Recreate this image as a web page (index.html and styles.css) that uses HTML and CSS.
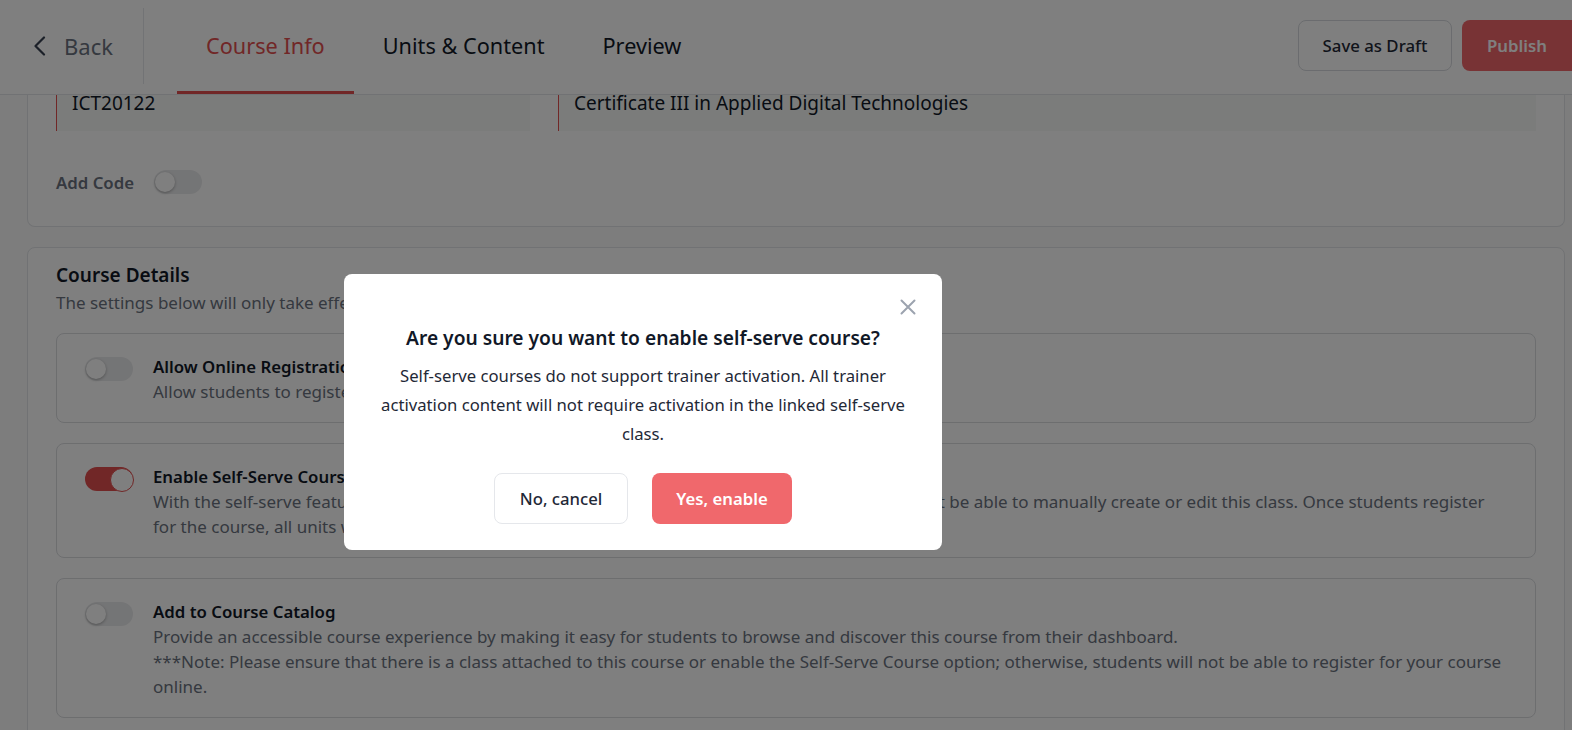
FILE: index.html
```html
<!DOCTYPE html>
<html lang="en">
<head>
<meta charset="utf-8">
<title>Course Info</title>
<link rel="stylesheet" href="styles.css">
</head>
<body>
<header class="topbar">
  <a class="back">
    <svg class="back-icon" width="13" height="20" viewBox="0 0 13 20"><path d="M11 1.5 L2.5 10 L11 18.5" fill="none" stroke="#374151" stroke-width="2.2" stroke-linecap="round" stroke-linejoin="round"/></svg>
    <span>Back</span>
  </a>
  <nav class="tabs">
    <a class="tab active">Course Info</a>
    <a class="tab">Units &amp; Content</a>
    <a class="tab">Preview</a>
  </nav>
  <div class="actions">
    <button class="btn btn-outline">Save as Draft</button>
    <button class="btn btn-primary">Publish</button>
  </div>
</header>

<main class="main">
  <section class="card card-top">
    <div class="inputs">
      <div class="input">ICT20122</div>
      <div class="input">Certificate III in Applied Digital Technologies</div>
    </div>
    <div class="code-row">
      <span class="code-label">Add Code</span>
      <span class="toggle"></span>
    </div>
  </section>

  <section class="card card-details">
    <h2 class="card-title">Course Details</h2>
    <p class="card-sub">The settings below will only take effect after the course is published.</p>
    <div class="options">
      <div class="option">
        <span class="toggle"></span>
        <div class="option-text">
          <div class="option-title">Allow Online Registration</div>
          <div class="option-desc">Allow students to register for this course online.</div>
        </div>
      </div>
      <div class="option">
        <span class="toggle on"></span>
        <div class="option-text">
          <div class="option-title">Enable Self-Serve Course</div>
          <div class="option-desc">With the self-serve feature, a class will be automatically created for this new course and you will not be able to manually create or edit this class. Once students register for the course, all units will be automatically released to them.</div>
        </div>
      </div>
      <div class="option">
        <span class="toggle"></span>
        <div class="option-text">
          <div class="option-title">Add to Course Catalog</div>
          <div class="option-desc">Provide an accessible course experience by making it easy for students to browse and discover this course from their dashboard.</div>
          <div class="option-desc">***Note: Please ensure that there is a class attached to this course or enable the Self-Serve Course option; otherwise, students will not be able to register for your course online.</div>
        </div>
      </div>
    </div>
  </section>
</main>

<div class="overlay">
  <div class="modal">
    <button class="modal-close" aria-label="Close">
      <svg width="16" height="16" viewBox="0 0 16 16"><path d="M1.5 1.5 L14.5 14.5 M14.5 1.5 L1.5 14.5" stroke="#9ca3af" stroke-width="2" stroke-linecap="round"/></svg>
    </button>
    <h3 class="modal-title">Are you sure you want to enable self-serve course?</h3>
    <p class="modal-body">Self-serve courses do not support trainer activation. All trainer activation content will not require activation in the linked self-serve class.</p>
    <div class="modal-actions">
      <button class="mbtn mbtn-cancel">No, cancel</button>
      <button class="mbtn mbtn-confirm">Yes, enable</button>
    </div>
  </div>
</div>
</body>
</html>
```

FILE: styles.css
```css
* { box-sizing: border-box; }

html, body {
  margin: 0;
  padding: 0;
  overflow: hidden;
}

body {
  font-family: "Noto Sans", "Open Sans", sans-serif;
  background: #fafafa;
  color: #111827;
  width: 1572px;
  height: 730px;
}

/* ---------- Top bar ---------- */
.topbar {
  display: flex;
  align-items: stretch;
  height: 95px;
  background: #ffffff;
  border-bottom: 1px solid #e2e4e8;
}

.back {
  display: flex;
  align-items: center;
  gap: 18px;
  padding: 0 30px 0 33px;
  margin: 8px 0 10px;
  border-right: 1px solid #e5e7eb;
  color: #6b7280;
  font-size: 22px;
  cursor: pointer;
}

.back-icon { display: block; }

.tabs {
  display: flex;
  margin-left: 33px;
}

.tab {
  display: flex;
  align-items: center;
  padding: 0 29px;
  font-size: 21.7px;
  color: #111827;
  border-bottom: 3px solid transparent;
  cursor: pointer;
}

.tab.active {
  color: #e24e4e;
  border-bottom-color: #e24e4e;
}

.actions {
  margin-left: auto;
  display: flex;
  align-items: center;
  gap: 10px;
  padding-bottom: 3px;
}

.btn {
  font-family: inherit;
  font-size: 16.8px;
  font-weight: 500;
  height: 51px;
  border-radius: 8px;
  cursor: pointer;
}

.btn-outline {
  width: 154px;
  background: #fff;
  color: #1f2937;
  border: 1px solid #d6d9de;
}

.btn-primary {
  width: 110px;
  background: #f0676b;
  color: #fff;
  border: none;
  font-weight: 600;
  border-radius: 8px 0 0 8px;
}

/* ---------- Main ---------- */
.main {
  padding: 0 7px 40px 27px;
}

.card {
  background: #ffffff;
  border: 1px solid #e2e4e8;
  border-radius: 8px;
}

.card-top {
  border-top: none;
  border-radius: 0 0 8px 8px;
  padding: 0 28px 32px;
}

.inputs {
  display: grid;
  grid-template-columns: 474px 1fr;
  gap: 28px;
}

.input {
  background: #f6f8f7;
  border-left: 1px solid #e24e4e;
  font-size: 19px;
  line-height: 16px;
  padding: 0 15px 20px;
  color: #111827;
}

.code-row {
  display: flex;
  align-items: center;
  gap: 20px;
  margin-top: 39px;
}

.code-label {
  font-size: 16.8px;
  font-weight: 600;
  color: #6b7280;
}

/* ---------- Toggle ---------- */
.toggle {
  position: relative;
  flex: none;
  display: block;
  width: 48px;
  height: 24px;
  border-radius: 12px;
  background: #e9eaec;
}

.toggle::after {
  content: "";
  position: absolute;
  top: 2px;
  left: 1px;
  width: 20px;
  height: 20px;
  border-radius: 50%;
  background: #ffffff;
  box-shadow: 0 1px 3px rgba(0, 0, 0, 0.3);
}

.toggle.on {
  background: #e24e4e;
}

.toggle.on::after {
  left: 25px;
  top: 1px;
  width: 22px;
  height: 22px;
  border: 1px solid #e24e4e;
  box-shadow: none;
}

/* ---------- Details card ---------- */
.card-details {
  margin-top: 20px;
  padding: 14px 28px 20px;
}

.card-title {
  margin: 0;
  font-size: 19px;
  line-height: 26px;
  font-weight: 600;
  color: #111827;
}

.card-sub {
  margin: 3px 0 0;
  font-size: 17px;
  line-height: 24px;
  color: #6b7280;
}

.options {
  display: flex;
  flex-direction: column;
  gap: 20px;
  margin-top: 18px;
}

.option {
  display: flex;
  gap: 20px;
  padding: 20px 24px 18px 28px;
  border: 1px solid #dadcdf;
  border-radius: 8px;
}

.option .toggle { margin-top: 3px; }

.option-title {
  font-size: 16.8px;
  line-height: 25px;
  font-weight: 600;
  color: #111827;
}

.option-desc {
  font-size: 17px;
  line-height: 25px;
  color: #6b7280;
}

/* ---------- Modal ---------- */
.overlay {
  position: fixed;
  inset: 0;
  background: rgba(0, 0, 0, 0.5);
}

.modal {
  position: absolute;
  left: 344px;
  top: 274px;
  width: 598px;
  background: #ffffff;
  border-radius: 8px;
  padding: 50px 28px 26px;
  text-align: center;
}

.modal-close {
  position: absolute;
  top: 25px;
  right: 26px;
  width: 16px;
  height: 16px;
  padding: 0;
  border: none;
  background: none;
  cursor: pointer;
}

.modal-close svg { display: block; }

.modal-title {
  margin: 0;
  font-size: 19.2px;
  line-height: 28px;
  font-weight: 600;
  color: #111827;
}

.modal-body {
  margin: 9px 0 0;
  font-size: 16.7px;
  line-height: 29px;
  color: #1f2937;
}

.modal-actions {
  display: flex;
  justify-content: center;
  gap: 24px;
  margin-top: 25px;
}

.mbtn {
  font-family: inherit;
  font-size: 16.7px;
  height: 51px;
  border-radius: 8px;
  cursor: pointer;
}

.mbtn-cancel {
  width: 134px;
  background: #ffffff;
  color: #1f2937;
  border: 1px solid #e5e7eb;
  font-weight: 500;
}

.mbtn-confirm {
  width: 140px;
  background: #f0686c;
  color: #ffffff;
  border: none;
  font-weight: 600;
}
```
